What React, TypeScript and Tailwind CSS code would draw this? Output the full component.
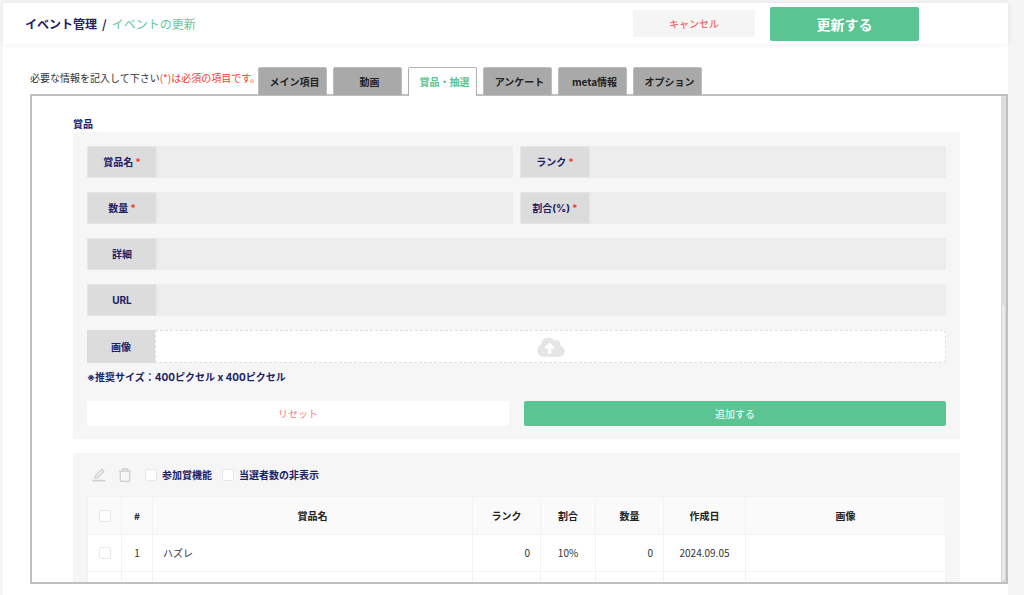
import React, { useId } from "react";
import { AiOutlineEdit } from "react-icons/ai";
import { FaCloudUploadAlt } from "react-icons/fa";

const tabs = ["メイン項目", "動画", "賞品・抽選", "アンケート", "meta情報", "オプション"];

type FieldProps = { label: string; required?: boolean; wide?: boolean };

function Field({ label, required, wide }: FieldProps) {
  const id = useId();
  return (
    <div className={wide ? "col-span-2 flex h-8 bg-[#ededed]" : "flex h-8 bg-[#ededed]"}>
      <label
        htmlFor={id}
        className="flex w-[70px] shrink-0 items-center justify-center gap-0.5 border border-[#e6e6e6] bg-[#dcdcdc] font-['Inter','Noto_Sans_CJK_JP',sans-serif] font-bold text-[#1b2168]"
      >
        {label}
        {required && <span className="text-[#f5392f]">*</span>}
      </label>
      <input id={id} type="text" className="min-w-0 flex-1 bg-transparent px-2 outline-none" />
    </div>
  );
}

function Check({ label }: { label: string }) {
  return (
    <input
      type="checkbox"
      aria-label={label}
      className="block size-3 shrink-0 appearance-none rounded-xs border border-[#e8e8e8] bg-white checked:bg-[#5ac492]"
    />
  );
}

function TrashIcon() {
  return (
    <svg viewBox="0 0 16 16" className="size-4" fill="none" stroke="currentColor" strokeWidth="1.3" aria-hidden="true">
      <path d="M1.8 4.2h12.4" />
      <path d="M5.2 3.8V1.9h5.6v1.9" fill="#dedede" strokeLinejoin="round" />
      <path d="M3.3 4.4v8.8c0 .7.5 1.2 1.2 1.2h7c.7 0 1.2-.5 1.2-1.2V4.4" />
    </svg>
  );
}

const columns = [
  { title: "#", col: "w-[31px]" },
  { title: "賞品名", col: "" },
  { title: "ランク", col: "w-[68px]" },
  { title: "割合", col: "w-[55px]" },
  { title: "数量", col: "w-[68px]" },
  { title: "作成日", col: "w-[82px]" },
  { title: "画像", col: "w-[200px]" },
];

const rows = [{ no: 1, name: "ハズレ", rank: 0, rate: "10%", amount: 0, date: "2024.09.05" }];

const cell = "border border-[#f2f2f2]";

export default function App() {
  return (
    <div className="flex h-screen flex-col overflow-hidden bg-[#f5f5f5] pt-[3px] pr-4 pl-[3px] font-['Noto_Sans_CJK_JP',sans-serif] text-[10px] leading-4 text-[#333]">
      <header className="z-10 flex h-[41px] shrink-0 items-center bg-white pr-[89px] pl-[22px] shadow-[0_0_6px_rgba(0,0,0,0.08)]">
        <h1 className="flex gap-[5px] text-xs font-bold text-[#1b2168]">
          <span>イベント管理</span>
          <span>/</span>
          <span className="font-normal text-[#63c798]">イベントの更新</span>
        </h1>
        <button type="button" className="ml-auto h-[27px] w-[122px] rounded-xs bg-[#f5f5f5] font-medium text-[#f06a6a]">
          キャンセル
        </button>
        <button type="button" className="ml-[15px] h-[34px] w-[149px] rounded-xs bg-[#5ac492] text-sm font-bold text-white">
          更新する
        </button>
      </header>

      <main className="flex min-h-0 flex-1 flex-col bg-white pt-[23px] pb-[11px] pl-[27px]">
        <div className="z-10 -mb-0.5 flex shrink-0 items-start">
          <p className="mt-[3px] w-[228px] whitespace-nowrap">
            必要な情報を記入して下さい<span className="text-[#f5392f]">(*)は必須の項目です。</span>
          </p>
          <div role="tablist" className="flex gap-1.5">
            {tabs.map((tab, i) => (
              <button
                key={tab}
                type="button"
                role="tab"
                aria-selected={i === 2}
                className={
                  i === 2
                    ? "h-[29px] w-[69px] rounded-t-xs border-x border-t border-[#b0b0b0] bg-white pl-1 font-bold whitespace-nowrap text-[#5ac492]"
                    : "h-[29px] w-[69px] rounded-t-xs border border-[#bdbdbd] bg-[#a9a9a9] pl-1 font-bold whitespace-nowrap text-[#222]"
                }
              >
                {tab}
              </button>
            ))}
          </div>
        </div>

        <div className="flex min-h-0 flex-1 border-2 border-[#c0c0c0]">
          <div className="min-w-0 flex-1 overflow-hidden px-[41px] pt-5">
            <h2 className="font-bold text-[#1b2168]">賞品</h2>
            <section className="bg-[#f6f6f6] p-3.5 pb-[13px]">
              <div className="grid grid-cols-2 gap-x-[7px] gap-y-3.5">
                <Field label="賞品名" required />
                <Field label="ランク" required />
                <Field label="数量" required />
                <Field label="割合(%)" required />
                <Field label="詳細" wide />
                <Field label="URL" wide />
                <div className="col-span-2 flex h-[33px]">
                  <label
                    htmlFor="image"
                    className="flex w-[68px] shrink-0 items-center justify-center bg-[#dcdcdc] font-bold text-[#1b2168]"
                  >
                    画像
                  </label>
                  <label
                    htmlFor="image"
                    className="relative flex flex-1 items-center justify-center rounded-r-sm border border-dashed border-[#dedede] bg-white text-[#e5e5e5]"
                  >
                    <input id="image" type="file" className="sr-only" />
                    <FaCloudUploadAlt className="h-[22px] w-7" />
                  </label>
                </div>
              </div>
              <p className="mt-1.5 font-['Inter','Noto_Sans_CJK_JP',sans-serif] font-bold text-[#1b2168]">
                ※推奨サイズ：400ピクセル x 400ピクセル
              </p>
              <div className="mt-4 grid grid-cols-2 gap-[15px]">
                <button type="button" className="h-[25px] rounded-xs bg-white text-[#f58080]">
                  リセット
                </button>
                <button type="button" className="h-[25px] rounded-xs bg-[#5ac492] text-white">
                  追加する
                </button>
              </div>
            </section>

            <section className="mt-3.5 bg-[#f6f6f6] p-3.5">
              <div className="flex h-4 items-center font-bold text-[#1b2168]">
                <button type="button" aria-label="編集" className="ml-1 text-[#cfcfcf]">
                  <AiOutlineEdit className="size-4" strokeWidth={24} />
                </button>
                <button type="button" aria-label="削除" className="ml-2.5 text-[#cfcfcf]">
                  <TrashIcon />
                </button>
                <div className="ml-3 flex items-center gap-[5px]">
                  <Check label="参加賞機能" />
                  <span>参加賞機能</span>
                </div>
                <div className="ml-2.5 flex items-center gap-[5px]">
                  <Check label="当選者数の非表示" />
                  <span>当選者数の非表示</span>
                </div>
              </div>
              <table className="mt-[13px] w-full table-fixed border-collapse border border-[#e2e2e2] bg-white">
                <colgroup>
                  <col className="w-[34px]" />
                  {columns.map((c) => (
                    <col key={c.title} className={c.col} />
                  ))}
                </colgroup>
                <thead>
                  <tr className="h-[38px] bg-[#fafafa] text-[#222]">
                    <th className={cell}>
                      <div className="flex justify-center">
                        <Check label="すべて選択" />
                      </div>
                    </th>
                    {columns.map((c) => (
                      <th key={c.title} className={cell}>
                        {c.title}
                      </th>
                    ))}
                  </tr>
                </thead>
                <tbody>
                  {rows.map((r) => (
                    <tr key={r.no} className="h-[37px]">
                      <td className={cell}>
                        <div className="flex justify-center">
                          <Check label={r.name} />
                        </div>
                      </td>
                      <td className="border border-[#f2f2f2] text-center">{r.no}</td>
                      <td className="border border-[#f2f2f2] px-2.5">{r.name}</td>
                      <td className="border border-[#f2f2f2] px-2.5 text-right">{r.rank}</td>
                      <td className="border border-[#f2f2f2] text-center">{r.rate}</td>
                      <td className="border border-[#f2f2f2] px-2.5 text-right">{r.amount}</td>
                      <td className="border border-[#f2f2f2] text-center">{r.date}</td>
                      <td className={cell} />
                    </tr>
                  ))}
                  <tr className="h-[37px]">
                    <td className={cell} />
                    {columns.map((c) => (
                      <td key={c.title} className={cell} />
                    ))}
                  </tr>
                </tbody>
              </table>
            </section>
          </div>
          <div aria-hidden="true" className="w-[5px] shrink-0 rounded-full bg-[#ededed] shadow-[inset_0_0_2px_rgba(0,0,0,0.35)]">
            <div className="h-[43%] rounded-full bg-[#dcdcdc]" />
          </div>
        </div>
      </main>
    </div>
  );
}
